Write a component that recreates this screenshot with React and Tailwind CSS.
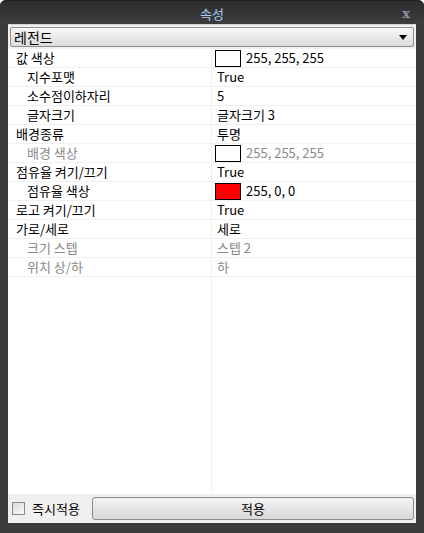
import React from "react";

const rows = [
  { label: "값 색상", value: "255, 255, 255", swatch: "#ffffff" },
  { label: "지수포맷", value: "True", indent: true },
  { label: "소수점이하자리", value: "5", indent: true },
  { label: "글자크기", value: "글자크기 3", indent: true },
  { label: "배경종류", value: "투명" },
  { label: "배경 색상", value: "255, 255, 255", swatch: "#ffffff", indent: true, muted: true },
  { label: "점유율 켜기/끄기", value: "True" },
  { label: "점유율 색상", value: "255, 0, 0", swatch: "#ff0000", indent: true },
  { label: "로고 켜기/끄기", value: "True" },
  { label: "가로/세로", value: "세로" },
  { label: "크기 스텝", value: "스텝 2", indent: true, muted: true },
  { label: "위치 상/하", value: "하", indent: true, muted: true },
];

export default function App() {
  return (
    <div
      className="w-[424px] h-[533px] bg-[#3b3b3b] rounded-t-[6px] flex flex-col text-[13px] text-black"
      style={{ fontFamily: '"Noto Sans CJK KR", "Noto Sans", sans-serif' }}
    >
      {/* Title bar */}
      <div className="h-[24px] shrink-0 grid grid-cols-[1fr_auto_1fr] items-center pt-[2px] rounded-t-[6px] bg-gradient-to-b from-[#2e2e2e] to-[#3d3d3d] border-t border-[#1e1e1e]">
        <div />
        <div className="text-[13px] text-[#a9cdf3] leading-none">속성</div>
        <div
          className="flex justify-end pr-[14px] text-[13px] font-bold text-[#8d9aa6] leading-none"
          style={{ fontFamily: '"DejaVu Serif", serif' }}
        >
          x
        </div>
      </div>

      {/* Panel */}
      <div className="mx-[8px] flex-1 flex flex-col bg-[#f0f0f0] border-t border-[#d5d5d5]">
        <div className="px-[2px] pt-[2px] pb-[2px]">
          <div className="h-[20px] flex items-center justify-between pl-[3px] pr-[6px] rounded-[2px] border border-[#8e8e8e] bg-gradient-to-b from-[#f7f7f7] to-[#dddddd]">
            <span className="leading-none text-[14px]">레전드</span>
            <span className="w-0 h-0 border-l-[4px] border-r-[4px] border-t-[5px] border-l-transparent border-r-transparent border-t-black" />
          </div>
        </div>

        {/* Property grid */}
        <div className="flex-1 flex flex-col bg-white">
          {rows.map((r) => (
            <div key={r.label} className="h-[19px] flex border-b border-[#f0f0f0]">
              <div
                className={`w-[204px] shrink-0 flex items-center border-r border-[#f0f0f0] ${
                  r.indent ? "pl-[19px]" : "pl-[8px]"
                } ${r.muted ? "text-[#8a8a8a]" : ""}`}
              >
                {r.label}
              </div>
              <div className={`flex-1 flex items-center pl-[5px] ${r.muted ? "text-[#8a8a8a]" : ""}`}>
                {r.swatch && (
                  <span
                    className={`w-[26px] h-[17px] mr-[5px] -ml-[2px] border border-black ${
                      r.swatch === "#ff0000" ? "bg-[#ff0000]" : "bg-white"
                    }`}
                  />
                )}
                {r.value}
              </div>
            </div>
          ))}
          <div className="flex-1 flex">
            <div className="w-[204px] border-r border-[#f0f0f0]" />
          </div>
        </div>

        {/* Bottom bar */}
        <div className="h-[29px] shrink-0 flex items-center pl-[4px] pr-[2px]">
          <span className="w-[13px] h-[13px] border border-[#8a8a8a] bg-gradient-to-br from-[#dcdcdc] to-[#f8f8f8] mr-[7px]" />
          <span className="leading-none">즉시적용</span>
          <button className="ml-[12px] flex-1 h-[23px] rounded-[3px] border border-[#8a8a8a] bg-gradient-to-b from-[#f4f4f4] to-[#d9d9d9] text-[13px] leading-none">
            적용
          </button>
        </div>
      </div>

      <div className="h-[10px] shrink-0" />
    </div>
  );
}
